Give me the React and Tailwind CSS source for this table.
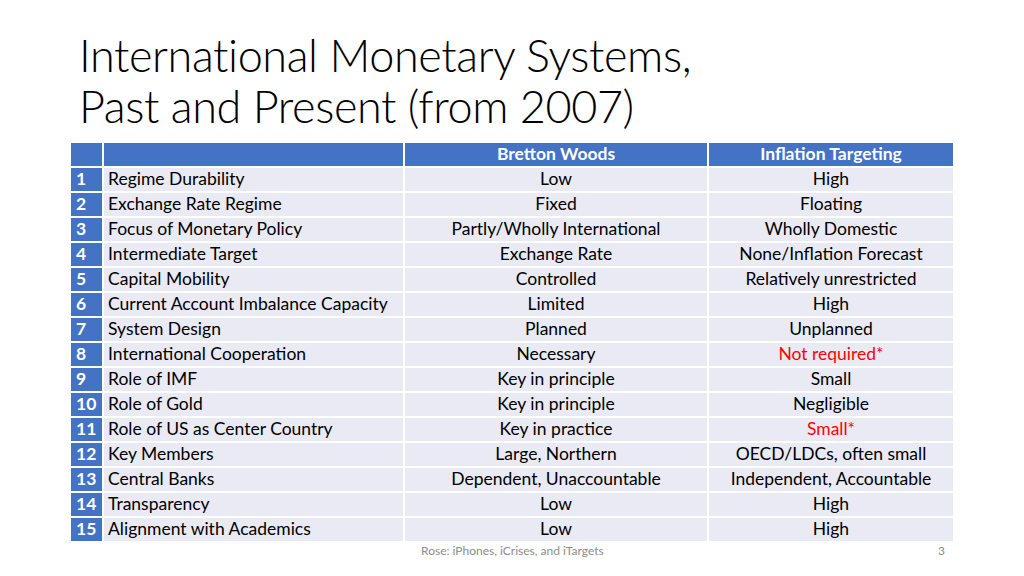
import React from 'react'

const rows = [
  ['Regime Durability', 'Low', 'High'],
  ['Exchange Rate Regime', 'Fixed', 'Floating'],
  ['Focus of Monetary Policy', 'Partly/Wholly International', 'Wholly Domestic'],
  ['Intermediate Target', 'Exchange Rate', 'None/Inflation Forecast'],
  ['Capital Mobility', 'Controlled', 'Relatively unrestricted'],
  ['Current Account Imbalance Capacity', 'Limited', 'High'],
  ['System Design', 'Planned', 'Unplanned'],
  ['International Cooperation', 'Necessary', 'Not required*', true],
  ['Role of IMF', 'Key in principle', 'Small'],
  ['Role of Gold', 'Key in principle', 'Negligible'],
  ['Role of US as Center Country', 'Key in practice', 'Small*', true],
  ['Key Members', 'Large, Northern', 'OECD/LDCs, often small'],
  ['Central Banks', 'Dependent, Unaccountable', 'Independent, Accountable'],
  ['Transparency', 'Low', 'High'],
  ['Alignment with Academics', 'Low', 'High'],
]

export default function App() {
  return (
    <div className="w-[1024px] h-[576px] bg-white relative overflow-hidden text-black" style={{ fontFamily: 'Lato, "Open Sans", sans-serif' }}>
      <h1 className="pl-[79px] pt-[30px] text-[45px] leading-[51px] font-light tracking-[-0.4px]">
        International Monetary Systems,<br />Past and Present (from 2007)
      </h1>

      <div className="ml-[71px] mt-[11px] w-[882px] grid grid-cols-[31px_299px_302px_244px] gap-[2px] text-[17.5px]">
        <div className="h-[23px] bg-[#4472c4]" />
        <div className="h-[23px] bg-[#4472c4]" />
        <div className="h-[23px] bg-[#4472c4] text-white font-bold flex items-center justify-center">Bretton Woods</div>
        <div className="h-[23px] bg-[#4472c4] text-white font-bold flex items-center justify-center">Inflation Targeting</div>
        {rows.map(([label, bw, it, red], i) => (
          <React.Fragment key={i}>
            <div className="h-[23px] bg-[#4472c4] text-white font-bold flex items-center pl-[5px]">{i + 1}</div>
            <div className="h-[23px] bg-[#e9eaf3] flex items-center pl-[4px]">{label}</div>
            <div className="h-[23px] bg-[#e9eaf3] flex items-center justify-center">{bw}</div>
            <div className={`h-[23px] bg-[#e9eaf3] flex items-center justify-center ${red ? 'text-[#ff0000]' : ''}`}>{it}</div>
          </React.Fragment>
        ))}
      </div>

      <div className="flex items-center w-[882px] ml-[71px] mt-[1px] text-[12px] text-[#8c8c8c]">
        <div className="w-[350px]" />
        <div className="flex-1">Rose: iPhones, iCrises, and iTargets</div>
        <div className="pr-[8px]">3</div>
      </div>
    </div>
  )
}
